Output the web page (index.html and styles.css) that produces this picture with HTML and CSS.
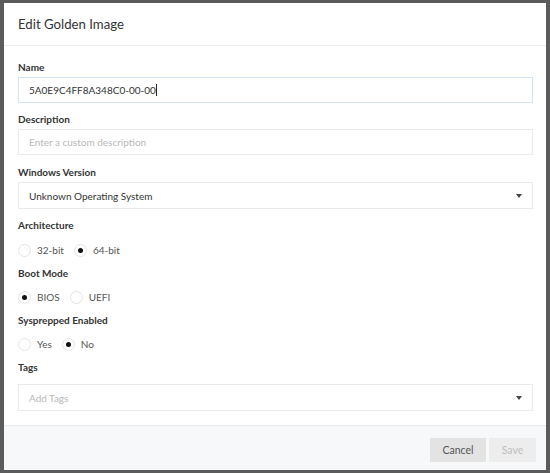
FILE: index.html
```html
<!DOCTYPE html>
<html lang="en">
<head>
    <meta charset="UTF-8">
    <title>Edit Golden Image</title>
    <link rel="stylesheet" href="styles.css">
</head>
<body>
    <div class="dialog">
        <div class="dialog-header">
            <h2>Edit Golden Image</h2>
        </div>

        <div class="dialog-body">
            <div class="field">
                <label>Name</label>
                <div class="input focused">5A0E9C4FF8A348C0-00-00<span class="caret"></span></div>
            </div>

            <div class="field desc">
                <label>Description</label>
                <div class="input placeholder">Enter a custom description</div>
            </div>

            <div class="field">
                <label>Windows Version</label>
                <div class="input select">
                    <span>Unknown Operating System</span>
                    <span class="arrow"></span>
                </div>
            </div>

            <div class="field radios arch">
                <label>Architecture</label>
                <div class="radio-row">
                    <span class="radio"><span class="dot"></span>32-bit</span>
                    <span class="radio checked"><span class="dot"></span>64-bit</span>
                </div>
            </div>

            <div class="field radios">
                <label>Boot Mode</label>
                <div class="radio-row">
                    <span class="radio checked"><span class="dot"></span>BIOS</span>
                    <span class="radio"><span class="dot"></span>UEFI</span>
                </div>
            </div>

            <div class="field radios">
                <label>Sysprepped Enabled</label>
                <div class="radio-row">
                    <span class="radio"><span class="dot"></span>Yes</span>
                    <span class="radio checked"><span class="dot"></span>No</span>
                </div>
            </div>

            <div class="field tags">
                <label>Tags</label>
                <div class="input select placeholder">
                    <span>Add Tags</span>
                    <span class="arrow"></span>
                </div>
            </div>
        </div>

        <div class="dialog-footer">
            <button class="btn cancel">Cancel</button>
            <button class="btn save" disabled>Save</button>
        </div>
    </div>
</body>
</html>
```

FILE: styles.css
```css
body {
    margin: 0;
    padding: 3px 4px;
    background-color: #5b5b5b;
    font-family: Lato, "Open Sans", sans-serif;
    color: #333;
}
.dialog {
    width: 542px;
    height: 467px;
    background-color: #fff;
    display: flex;
    flex-direction: column;
}
.dialog-header {
    height: 42px;
    display: flex;
    align-items: center;
    padding-left: 14px;
    border-bottom: 1px solid #ececec;
}
.dialog-header h2 {
    margin: 0;
    font-size: 13.2px;
    font-weight: normal;
    color: #333;
}
.dialog-body {
    flex: 1;
    padding: 15px 13px 0 14px;
}
.field {
    margin-bottom: 10px;
}
.field.desc {
    margin-bottom: 11px;
}
.field label {
    display: block;
    font-size: 10px;
    font-weight: bold;
    line-height: 12px;
    margin-bottom: 4px;
    color: #333;
}
.input {
    height: 24px;
    border: 1px solid #eaeaea;
    padding: 0 10px;
    display: flex;
    align-items: center;
    font-size: 10px;
    color: #333;
}
.input.focused {
    border-color: #d3e4f2;
}
.input.placeholder {
    color: #b8b8b8;
}
.caret {
    display: inline-block;
    width: 1px;
    height: 12px;
    background-color: #222;
}
.select {
    height: 25px;
    justify-content: space-between;
    padding-right: 10px;
}
.arrow {
    width: 0;
    height: 0;
    border-left: 3.5px solid transparent;
    border-right: 3.5px solid transparent;
    border-top: 4px solid #444;
}
.radios {
    margin-bottom: 7px;
}
.radios label {
    margin-bottom: 8px;
}
.arch label {
    margin-bottom: 9px;
}
.radio-row {
    display: flex;
    align-items: center;
    height: 20px;
}
.radio {
    display: flex;
    align-items: center;
    font-size: 10px;
    color: #555;
    margin-right: 10px;
}
.radio .dot {
    box-sizing: border-box;
    width: 13px;
    height: 13px;
    border: 1px solid #e4e4e4;
    border-radius: 50%;
    margin-right: 6px;
    position: relative;
}
.radio.checked .dot::after {
    content: "";
    position: absolute;
    top: 3px;
    left: 3px;
    width: 5px;
    height: 5px;
    border-radius: 50%;
    background-color: #111;
}
.tags label {
    margin-bottom: 11px;
}
.dialog-footer {
    height: 45px;
    border-top: 1px solid #ebebeb;
    background-color: #f7f8fa;
    display: flex;
    justify-content: flex-end;
    align-items: flex-start;
    padding: 12px 10px 0 0;
    box-sizing: border-box;
}
.btn {
    border: none;
    height: 24px;
    font-family: Lato, "Open Sans", sans-serif;
    font-size: 10.5px;
    padding: 0;
}
.cancel {
    width: 56px;
    background-color: #e3e3e3;
    color: #555;
    margin-right: 3px;
}
.save {
    width: 47px;
    background-color: #ededed;
    color: #bdbdbd;
}
```
